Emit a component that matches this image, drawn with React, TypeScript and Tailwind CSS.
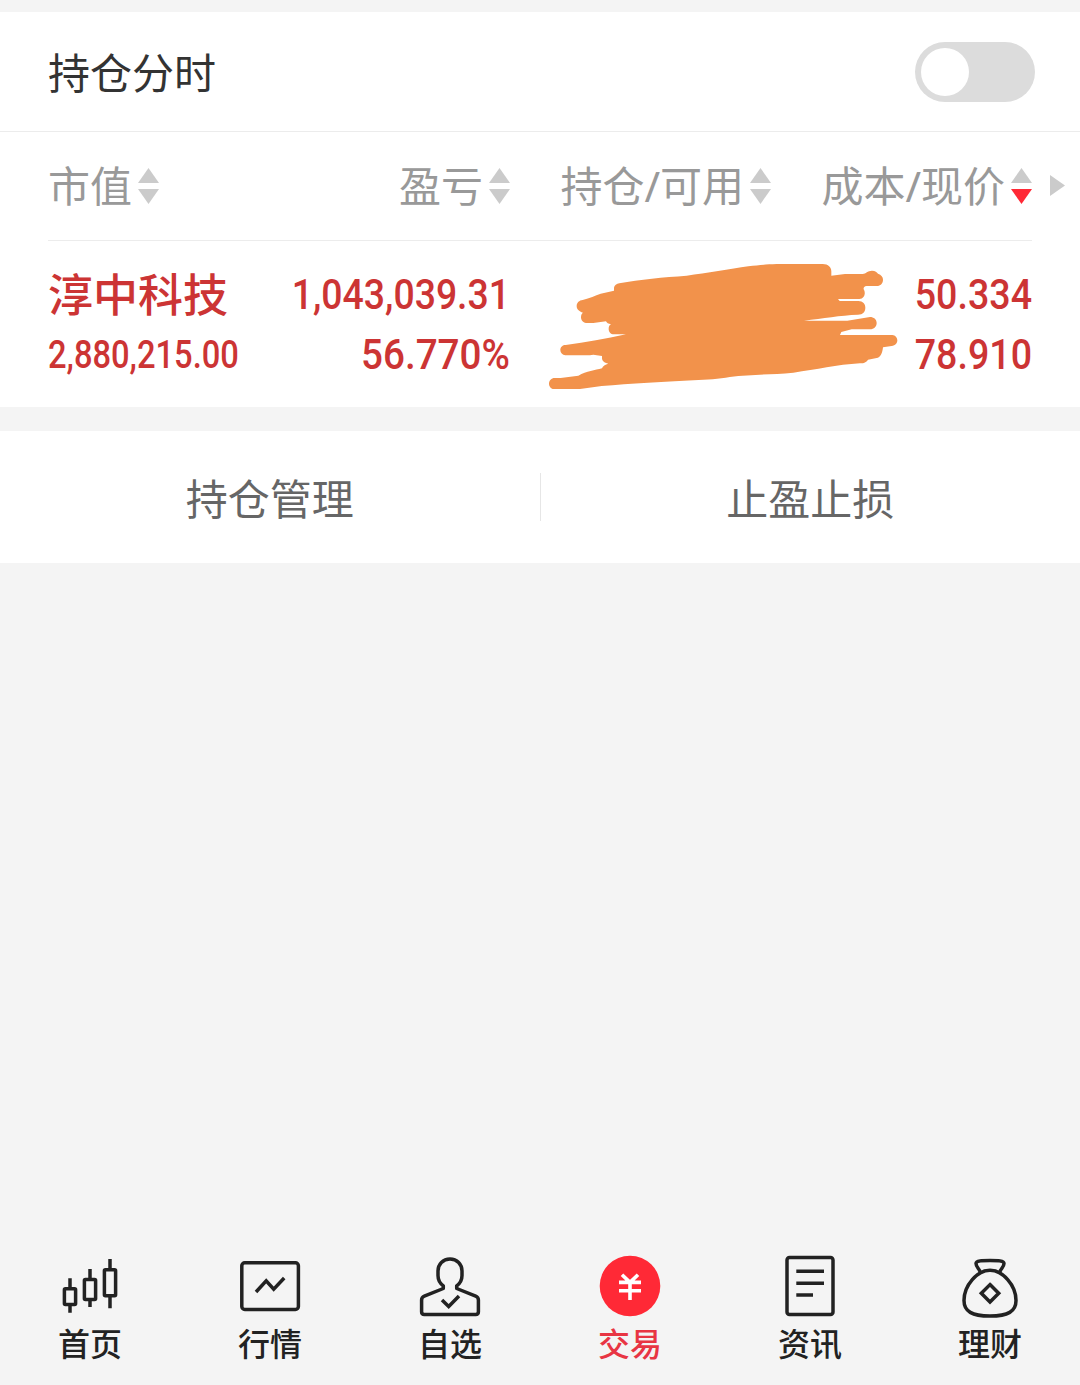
import { useState } from "react";
import type { ReactNode } from "react";
import clsx from "clsx";

type SortOrder = "asc" | "desc" | null;

const columns: { label: string; order: SortOrder }[] = [
  { label: "市值", order: null },
  { label: "盈亏", order: null },
  { label: "持仓/可用", order: null },
  { label: "成本/现价", order: "desc" },
];

function SortIcon({ order }: { order: SortOrder }) {
  return (
    <svg width="21" height="36" viewBox="0 0 21 36" className="ml-1.5 shrink-0">
      <path d="M10.5 0L21 15H0z" fill={order === "asc" ? "#ff2936" : "#cbcbcb"} />
      <path d="M10.5 36L0 21h21z" fill={order === "desc" ? "#ff2936" : "#cbcbcb"} />
    </svg>
  );
}

// hand-drawn marker over the share count
function Scribble() {
  return (
    <svg
      width="380"
      height="166"
      viewBox="0 3 1140 498"
      className="absolute left-5 top-0"
      fill="#f2924b"
    >
      <path d="M268 130C330 118 400 112 470 107C530 99 600 87 655 79C690 75 710 73 740 72H878C895 72 904 82 904 94V107L945 102H998C1008 101 1012 92 1026 92C1036 92 1041 97 1044 101C1054 104 1059 111 1059 119C1059 129 1052 138 1040 138H1010C1002 139 1000 144 1001 148C1008 158 1004 177 988 177H924L929 183H985C999 183 1006 192 1006 203C1006 215 999 224 984 224C930 226 880 235 822 242H952L1020 231C1031 231 1040 238 1040 249C1040 260 1032 268 1020 268H965L934 276L930 285H1087C1096 286 1102 293 1102 301C1102 310 1096 317 1085 318L1059 322C1057 340 1051 354 1040 354L1014 359C1008 367 1003 370 990 370C920 374 860 389 790 398C730 403 680 404 625 408C590 412 560 418 520 419C400 425 300 430 215 438L150 447H72C63 447 57 439 57 431C57 422 64 414 74 414H92L145 407C170 393 195 391 216 385C219 378 225 374 235 371C222 369 216 362 216 355V348L190 344L180 346H106C97 345 91 338 91 330C91 321 98 315 107 315C170 307 225 297 288 283H252C242 283 236 276 236 267C236 260 238 255 243 253C235 252 230 248 228 244L190 249H168C159 248 153 241 153 232C153 225 155 221 159 218C147 214 140 208 140 198C140 188 148 181 158 180C180 174 195 167 212 161L252 152V143C253 136 260 131 268 130Z" />
    </svg>
  );
}

function Icon({ children }: { children: ReactNode }) {
  return (
    <svg
      width="64"
      height="64"
      viewBox="0 0 64 64"
      fill="none"
      stroke="#222"
      strokeWidth="3.5"
      className="overflow-visible"
    >
      {children}
    </svg>
  );
}

const tabs: { label: string; icon: ReactNode }[] = [
  {
    label: "首页",
    icon: (
      <Icon>
        <rect x="6.4" y="34.7" width="11.2" height="15.9" rx="1" />
        <rect x="26.4" y="25.4" width="11.2" height="20.2" rx="1" />
        <rect x="46.4" y="15.7" width="11.2" height="26" rx="1" />
        <path d="M12 24.3V34M12 51V58.7M32 15V25M32 46V53M52 5V15M52 42V54.3" />
      </Icon>
    ),
  },
  {
    label: "行情",
    icon: (
      <Icon>
        <rect x="3.8" y="8.8" width="56.6" height="46.6" rx="3" />
        <path d="M18 38L28.2 26.8L35.7 35.2L46.2 24" />
      </Icon>
    ),
  },
  {
    label: "自选",
    icon: (
      <Icon>
        <path
          d="M25.3 34.5V31.8C21.8 29.3 20 25.8 20 21.5V17C20 10 25 5.1 32 5.1S44 10 44 17V21.5C44 25.8 42.2 29.3 38.7 31.8V34.5L57.7 42.2Q60.4 43.3 60.4 46V57.7Q60.4 60.4 57.7 60.4H6.3Q3.6 60.4 3.6 57.7V46Q3.6 43.3 6.3 42.2Z"
          strokeLinejoin="round"
        />
        <path d="M24 46L30.7 52.5L41 42" />
      </Icon>
    ),
  },
  {
    label: "交易",
    icon: (
      <Icon>
        <circle cx="32" cy="32" r="30.3" fill="#ff2936" stroke="none" />
        <path
          d="M24 20.7L32 28.4L40 20.7M21 28.4H43M21 36.8H43M32 28V46"
          stroke="#fff"
          strokeWidth="3.6"
        />
      </Icon>
    ),
  },
  {
    label: "资讯",
    icon: (
      <Icon>
        <rect x="9" y="3.5" width="46" height="57" rx="2.5" />
        <path d="M18.3 17.3H46M18.3 29.2H46M18.3 41.1H35" />
      </Icon>
    ),
  },
  {
    label: "理财",
    icon: (
      <Icon>
        <path d="M32 16.3C44.5 16.3 58 31 58 46.5C58 57.5 50 62 32 62S6 57.5 6 46.5C6 31 19.5 16.3 32 16.3Z" />
        <path
          d="M22.5 18.5C21.5 15 18 13 18 9.5C18 6.5 24 6.5 32 6.5S46 6.5 46 9.5C46 13 42.5 15 41.5 18.5"
          strokeLinejoin="round"
        />
        <path d="M32 30.600L40.700 39.300L32 48L23.300 39.300Z" />
      </Icon>
    ),
  },
];

export default function App() {
  const [intraday, setIntraday] = useState(false);
  const [active, setActive] = useState("交易");

  return (
    <div className="flex h-[1385px] w-[1080px] flex-col overflow-hidden bg-[#f4f4f4] pt-3 font-['Noto_Sans_CJK_SC',sans-serif] text-[42px]">
      <section className="bg-white">
        <div className="flex h-[120px] items-center justify-between border-b border-[#ececec] pl-12 pr-[45px]">
          <h1 className="pb-0.5 leading-[60px] text-[#333]">持仓分时</h1>
          <button
            role="switch"
            aria-checked={intraday}
            aria-label="持仓分时"
            onClick={() => setIntraday(!intraday)}
            className={clsx(
              "flex h-[60px] w-[120px] items-center rounded-full p-1.5",
              intraday ? "justify-end bg-[#ff2936]" : "bg-[#dcdcdc]",
            )}
          >
            <span className="size-12 rounded-full bg-white" />
          </button>
        </div>

        <div className="flex">
          <div className="ml-12 grid h-[109px] w-[984px] grid-cols-[201px_261px_261px_261px] items-center border-b border-[#ececec] font-['Noto_Sans','Noto_Sans_CJK_SC',sans-serif] leading-[60px] text-[#999]">
            {columns.map((col, i) => (
              <div
                key={col.label}
                className={clsx("flex items-center whitespace-nowrap", i > 0 && "justify-end")}
              >
                {col.label}
                <SortIcon order={col.order} />
              </div>
            ))}
          </div>
          <svg width="15" height="21" viewBox="0 0 15 21" className="ml-[18px] mt-[43px]">
            <path d="M0 0L15 10.5L0 21z" fill="#cbcbcb" />
          </svg>
        </div>

        <div className="ml-12 grid h-[166px] w-[984px] grid-cols-[201px_261px_261px_261px] pt-6 font-['Roboto','Noto_Sans_CJK_SC',sans-serif] font-medium leading-[60px] text-[#cc3434]">
          <div>
            <div className="h-[60px] pt-0.5 text-[45px]">淳中科技</div>
            <div className="origin-left scale-x-[.86] text-[38px]">2,880,215.00</div>
          </div>
          <div className="text-right">
            <div className="origin-right scale-x-[.89]">1,043,039.31</div>
            <div className="origin-right scale-x-[.92]">56.770%</div>
          </div>
          <div className="relative -mt-6">
            <Scribble />
          </div>
          <div className="origin-right scale-x-[.895] text-right">
            <div>50.334</div>
            <div>78.910</div>
          </div>
        </div>
      </section>

      <section className="mt-6 flex h-[132px] items-center bg-white leading-[60px] text-[#666]">
        <button className="flex-1">持仓管理</button>
        <div className="h-12 w-px bg-[#e6e6e6]" />
        <button className="flex-1">止盈止损</button>
      </section>

      <nav className="mt-auto flex h-[131px]">
        {tabs.map((tab) => (
          <button
            key={tab.label}
            onClick={() => setActive(tab.label)}
            className={clsx(
              "flex flex-1 flex-col items-center",
              active === tab.label ? "text-[#e83543]" : "text-[#222]",
            )}
          >
            {tab.icon}
            <span className="mt-0.5 text-[32px] font-medium leading-[44px]">{tab.label}</span>
          </button>
        ))}
      </nav>
    </div>
  );
}
